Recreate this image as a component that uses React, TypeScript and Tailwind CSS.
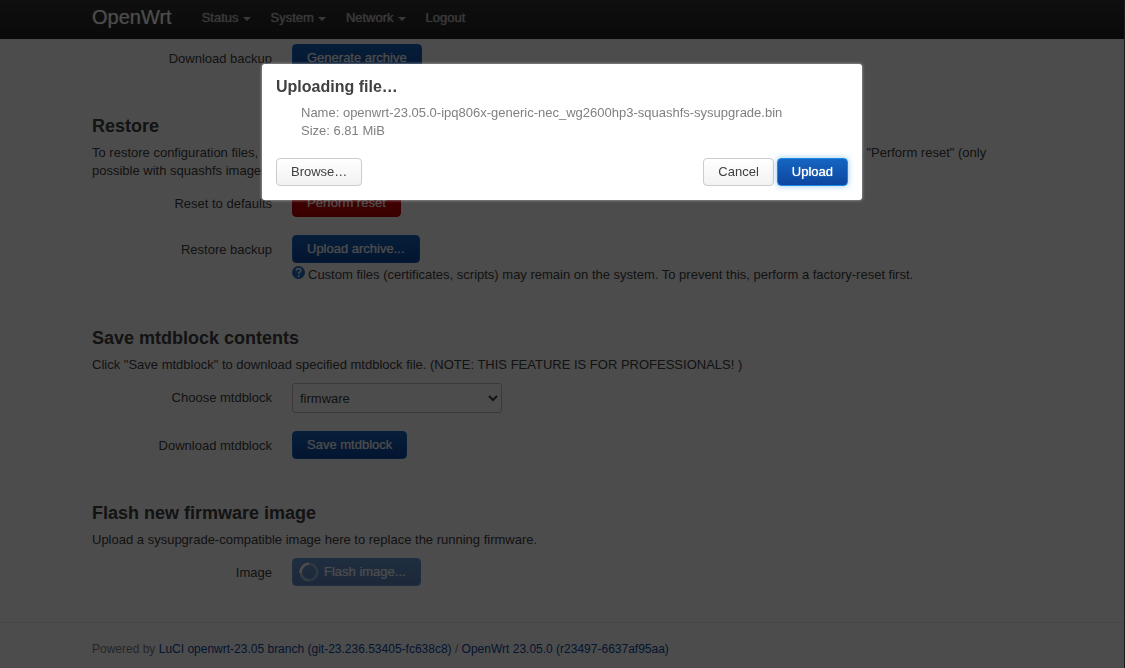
import type { ButtonHTMLAttributes, ReactNode } from "react";

const variants = {
  primary:
    "border-[#1565c0] bg-linear-to-b from-[#1565c0] to-[#0d47a1] text-white [text-shadow:0_0_1px_#ffffff99]",
  danger:
    "border-[#c00000] bg-linear-to-b from-[#e00000] to-[#c00000] text-white [text-shadow:0_0_1px_#ffffff99]",
  plain: "border-[#cccccc] bg-linear-to-b from-white to-[#f2f2f2] text-[#404040]",
  active:
    "border-[#1e88e5] bg-linear-to-b from-[#1565c0] to-[#0d47a1] text-white shadow-[0_0_6px_#52a8ec99] [text-shadow:0_0_1px_#ffffff]",
};

type ButtonProps = ButtonHTMLAttributes<HTMLButtonElement> & {
  variant: keyof typeof variants;
};

function Button({ variant, children, ...rest }: ButtonProps) {
  return (
    <button
      type="button"
      className={`inline-flex h-7 items-center gap-[5px] rounded border px-[14px] text-[13px] leading-[18px] whitespace-nowrap disabled:pl-[6px] disabled:opacity-65 ${variants[variant]}`}
      {...rest}
    >
      {children}
    </button>
  );
}

function Row({ label, htmlFor, children }: { label: string; htmlFor: string; children: ReactNode }) {
  return (
    <div className="flex items-start gap-5">
      <label htmlFor={htmlFor} className="w-[180px] shrink-0 pt-[6px] text-right">
        {label}
      </label>
      <div className="min-w-0 flex-1">{children}</div>
    </div>
  );
}

function Section({ title, text, children }: { title: string; text: string; children: ReactNode }) {
  return (
    <section>
      <h3 className="text-[18px] leading-9 font-bold">{title}</h3>
      <p className="mb-[9px]">{text}</p>
      <div className="flex flex-col gap-[18px]">{children}</div>
    </section>
  );
}

function HelpIcon() {
  return (
    <svg viewBox="0 0 13 13" className="size-[13px] shrink-0" aria-hidden="true">
      <circle cx="6.5" cy="6.5" r="6.5" fill="#1e72c8" />
      <path
        d="M4.3 4.800C4.400 3.300 5.300 2.600 6.500 2.600c1.300 0 2.200.7 2.200 1.900 0 1.600-2.100 1.700-2.100 3.400"
        fill="none"
        stroke="#fff"
        strokeWidth="1.500"
      />
      <circle cx="6.600" cy="10" r="1" fill="#fff" />
    </svg>
  );
}

function Spinner() {
  return (
    <svg viewBox="0 0 20 20" className="size-5" aria-hidden="true">
      <circle cx="10" cy="10" r="8.200" fill="none" stroke="#fff" strokeOpacity=".35" strokeWidth="2.600" />
      <path d="M1.800 11A8.200 8.200 0 0 1 10 1.800" fill="none" stroke="#fff" strokeWidth="2.600" />
      <path d="M10 18.200A8.200 8.200 0 0 1 1.800 11" fill="none" stroke="#fff" strokeOpacity=".3" strokeWidth="2.600" />
    </svg>
  );
}

const menu = [
  { label: "Status", dropdown: true },
  { label: "System", dropdown: true },
  { label: "Network", dropdown: true },
  { label: "Logout", dropdown: false },
];

function Header() {
  return (
    <header className="bg-linear-to-b from-[#333333] to-[#222222]">
      <div className="mx-auto flex h-[39px] max-w-[940px] items-center">
        <a href="#" className="mr-5 pb-[5px] text-[20px] leading-6 text-white [text-shadow:0_0_1px_#ffffff80]">
          OpenWrt
        </a>
        <nav className="flex pb-[3px] text-[#bfbfbf] [text-shadow:0_0_1px_#bfbfbf]">
          {menu.map((item) => (
            <a key={item.label} href="#" className="flex items-center gap-1 px-[10px]">
              {item.label}
              {item.dropdown && (
                <svg viewBox="0 0 8 4" className="mt-[2px] h-1 w-2" aria-hidden="true">
                  <path d="M0 0h8L4 4z" fill="#bfbfbf" />
                </svg>
              )}
            </a>
          ))}
        </nav>
      </div>
    </header>
  );
}

function UploadDialog() {
  return (
    <div className="fixed inset-0 flex items-start justify-center border-r border-[#1c1c1c] bg-black/70 pt-16">
      <div
        role="dialog"
        aria-modal="true"
        aria-labelledby="upload-title"
        className="w-full max-w-[600px] rounded-[3px] bg-white p-[14px] shadow-[0_0_3px_#bbbbbb]"
      >
        <h4 id="upload-title" className="mb-2 text-[16px] leading-[18px] font-bold">
          Uploading file…
        </h4>
        <ul className="ml-[25px] text-[#808080]">
          <li>Name: openwrt-23.05.0-ipq806x-generic-nec_wg2600hp3-squashfs-sysupgrade.bin</li>
          <li>Size: 6.81 MiB</li>
        </ul>
        <div className="mt-[18px] flex gap-[3px]">
          <Button variant="plain">Browse…</Button>
          <span className="flex-1" />
          <Button variant="plain">Cancel</Button>
          <Button variant="active">Upload</Button>
        </div>
      </div>
    </div>
  );
}

export default function App() {
  return (
    <div className="min-h-screen bg-white pr-px font-['Liberation_Sans',Arial,sans-serif] text-[13px] leading-[18px] text-[#404040]">
      <Header />
      <main className="mx-auto flex max-w-[940px] flex-col gap-9 pt-[5px] pb-[35px]">
        <Row label="Download backup" htmlFor="generate">
          <Button id="generate" variant="primary">Generate archive</Button>
        </Row>
        <Section
          title="Restore"
          text={
            'To restore configuration files, you can upload a previously generated backup archive here. To reset the firmware to its initial state, click "Perform reset" (only possible with squashfs images).'
          }
        >
          <Row label="Reset to defaults" htmlFor="reset">
            <Button id="reset" variant="danger">Perform reset</Button>
          </Row>
          <Row label="Restore backup" htmlFor="restore">
            <Button id="restore" variant="primary">Upload archive...</Button>
            <div className="flex items-start gap-[3px] pt-[3px]">
              <HelpIcon />
              <p>
                Custom files (certificates, scripts) may remain on the system. To prevent this, perform a
                factory-reset first.
              </p>
            </div>
          </Row>
        </Section>
        <Section
          title="Save mtdblock contents"
          text={
            'Click "Save mtdblock" to download specified mtdblock file. (NOTE: THIS FEATURE IS FOR PROFESSIONALS! )'
          }
        >
          <Row label="Choose mtdblock" htmlFor="block">
            <select
              id="block"
              className="block h-[30px] w-[210px] rounded-[3px] border border-[#bfbfbf] bg-white px-[3px] text-[13px]"
            >
              <option>firmware</option>
            </select>
          </Row>
          <Row label="Download mtdblock" htmlFor="save">
            <Button id="save" variant="primary">Save mtdblock</Button>
          </Row>
        </Section>
        <Section
          title="Flash new firmware image"
          text="Upload a sysupgrade-compatible image here to replace the running firmware."
        >
          <Row label="Image" htmlFor="flash">
            <Button id="flash" variant="primary" disabled>
              <Spinner />
              Flash image...
            </Button>
          </Row>
        </Section>
      </main>
      <footer className="border-t border-[#eeeeee] pt-[17px] text-[12px] text-[#808080]">
        <div className="mx-auto max-w-[940px]">
          Powered by{" "}
          <a href="#" className="text-[#0d47a1]">
            LuCI openwrt-23.05 branch (git-23.236.53405-fc638c8)
          </a>{" "}
          /{" "}
          <a href="#" className="text-[#0d47a1]">
            OpenWrt 23.05.0 (r23497-6637af95aa)
          </a>
        </div>
      </footer>
      <UploadDialog />
    </div>
  );
}
